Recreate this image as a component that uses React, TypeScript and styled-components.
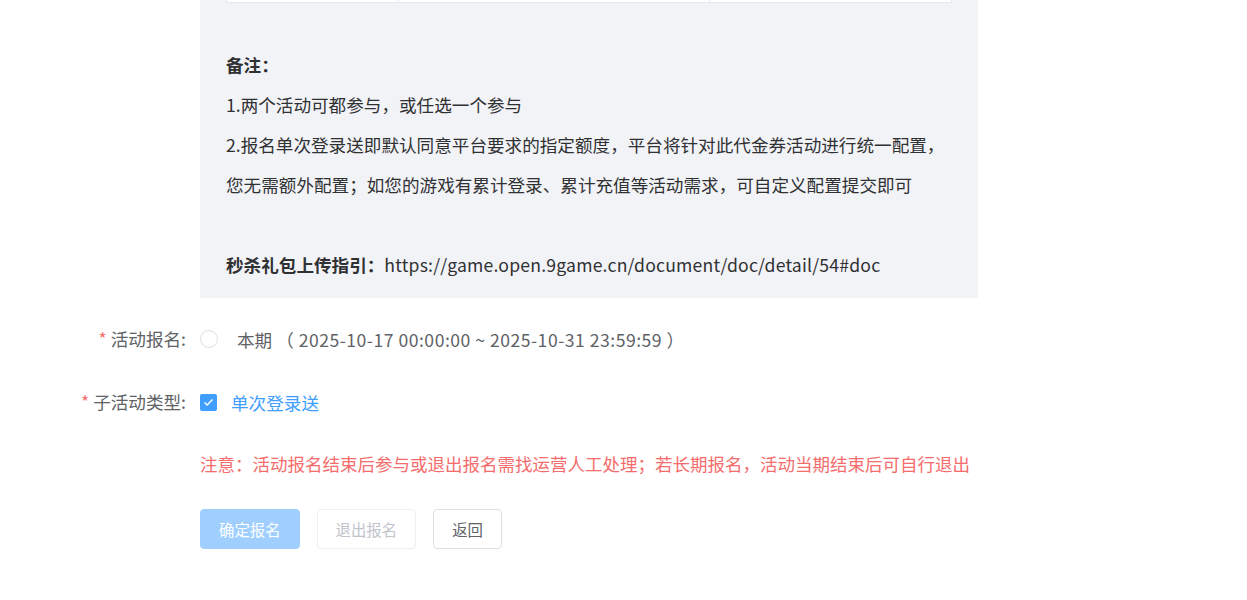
import React from 'react'
import styled, { createGlobalStyle } from 'styled-components'

const GlobalStyle = createGlobalStyle`
  html, body {
    margin: 0;
    padding: 0;
    background: #fff;
  }
  body {
    font-family: "Noto Sans CJK SC", "Liberation Sans", sans-serif;
    overflow: hidden;
  }
`

const Page = styled.div`
  width: 1247px;
  height: 600px;
  overflow: hidden;
`

const Form = styled.div`
  display: flex;
  flex-direction: column;
`

const FormItem = styled.div<{ $top: number }>`
  display: flex;
  align-items: center;
  min-height: 40px;
  margin-top: ${p => p.$top}px;
`

const Label = styled.div`
  width: 200px;
  box-sizing: border-box;
  padding-right: 14px;
  text-align: right;
  font-size: 17.6px;
  color: #606266;
  line-height: 40px;
  flex-shrink: 0;
`

const Star = styled.span`
  color: #f56c6c;
  margin-right: 4px;
`

const Content = styled.div`
  display: flex;
  align-items: center;
`

const Panel = styled.div`
  margin-left: 200px;
  width: 778px;
  box-sizing: border-box;
  background: #f2f3f7;
  padding: 0 26px 13px;
  color: #303133;
  font-size: 17.6px;
`

const Table = styled.div`
  display: grid;
  grid-template-columns: 172px 311px 243px;
  background: #fff;
  border: 1px solid #e4e7ed;
  border-top: none;
  height: 2px;
`

const Cell = styled.div`
  border-right: 1px solid #e4e7ed;
  &:last-child {
    border-right: none;
  }
`

const Line = styled.div<{ $bold?: boolean }>`
  line-height: 40px;
  height: 40px;
  font-weight: ${p => (p.$bold ? 700 : 400)};
  white-space: nowrap;
`

const Bold = styled.span`
  font-weight: 700;
`

const Url = styled.span`
  letter-spacing: 0.2px;
`

const Radio = styled.span`
  width: 16px;
  height: 16px;
  border-radius: 50%;
  border: 1px solid #dcdfe6;
  background: #fff;
  display: inline-block;
`

const RadioText = styled.span`
  margin-left: 19px;
  font-size: 17.6px;
  color: #606266;
  white-space: nowrap;
`

const Period = styled.span`
  letter-spacing: 0.5px;
`

const Checkbox = styled.span`
  width: 17px;
  height: 17px;
  border-radius: 2px;
  background: #409eff;
  display: inline-flex;
  align-items: center;
  justify-content: center;
`

const CheckText = styled.span`
  margin-left: 14px;
  font-size: 17.6px;
  color: #409eff;
`

const Notice = styled.div`
  margin: 22px 0 0 200px;
  line-height: 40px;
  font-size: 17.5px;
  color: #f56c6c;
  white-space: nowrap;
`

const Buttons = styled.div`
  margin: 25px 0 0 200px;
  display: flex;
  gap: 17px;
`

const Button = styled.button<{ $variant: 'primary' | 'disabled' | 'plain' }>`
  height: 40px;
  padding: 0 18px;
  border-radius: 4px;
  font-family: inherit;
  font-size: 15.4px;
  box-sizing: border-box;
  border: 1px solid
    ${p => (p.$variant === 'primary' ? '#a0cfff' : p.$variant === 'disabled' ? '#ebeef5' : '#dcdfe6')};
  background: ${p => (p.$variant === 'primary' ? '#a0cfff' : '#fff')};
  color: ${p => (p.$variant === 'primary' ? '#fff' : p.$variant === 'disabled' ? '#c0c4cc' : '#606266')};
  cursor: ${p => (p.$variant === 'plain' ? 'pointer' : 'not-allowed')};
`

export default function App() {
  return (
    <Page>
      <GlobalStyle />
      <Form>
        <Panel>
          <Table>
            <Cell />
            <Cell />
            <Cell />
          </Table>
          <Line />
          <Line $bold style={{ marginTop: 2 }}>备注：</Line>
          <Line>1.两个活动可都参与，或任选一个参与</Line>
          <Line>2.报名单次登录送即默认同意平台要求的指定额度，平台将针对此代金券活动进行统一配置，</Line>
          <Line>您无需额外配置；如您的游戏有累计登录、累计充值等活动需求，可自定义配置提交即可</Line>
          <Line />
          <Line>
            <Bold>秒杀礼包上传指引：</Bold>
            <Url>https://game.open.9game.cn/document/doc/detail/54#doc</Url>
          </Line>
        </Panel>
        <FormItem $top={21}>
          <Label>
            <Star>*</Star>活动报名:
          </Label>
          <Content>
            <Radio />
            <RadioText>
              本期 <Period>（ 2025-10-17 00:00:00 ~ 2025-10-31 23:59:59 ）</Period>
            </RadioText>
          </Content>
        </FormItem>
        <FormItem $top={23}>
          <Label>
            <Star>*</Star>子活动类型:
          </Label>
          <Content>
            <Checkbox>
              <svg width="11" height="9" viewBox="0 0 11 9" fill="none">
                <path d="M1.5 4.5 L4.2 7 L9.5 1.5" stroke="#fff" strokeWidth="1.4" />
              </svg>
            </Checkbox>
            <CheckText>单次登录送</CheckText>
          </Content>
        </FormItem>
        <Notice>注意：活动报名结束后参与或退出报名需找运营人工处理；若长期报名，活动当期结束后可自行退出</Notice>
        <Buttons>
          <Button $variant="primary">确定报名</Button>
          <Button $variant="disabled">退出报名</Button>
          <Button $variant="plain">返回</Button>
        </Buttons>
      </Form>
    </Page>
  )
}
